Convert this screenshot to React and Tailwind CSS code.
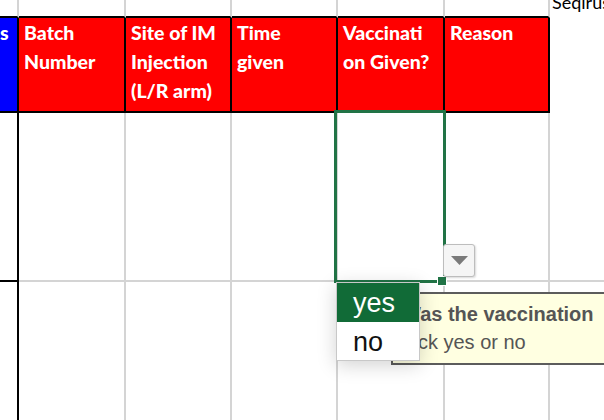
// Spreadsheet: vaccination log with data validation dropdown open
const cols = [19, 107, 106, 106, 107, 105, 54]

const headers = [
  ['s'],
  ['Batch', 'Number'],
  ['Site of IM', 'Injection', '(L/R arm)'],
  ['Time', 'given'],
  ['Vaccinati', 'on Given?'],
  ['Reason'],
]

const cal = { fontFamily: 'Lato, "Open Sans", sans-serif' }

function TopRow() {
  return (
    <div className="flex h-[18px]">
      {cols.map((w, i) => (
        <div
          key={i}
          style={{ width: w }}
          className={
            i < 6
              ? 'shrink-0 border-b-2 border-r-2 border-b-black border-r-[#d4d4d4]'
              : 'shrink-0 overflow-hidden pl-[2px]'
          }
        >
          {i === 6 && (
            <div className="-mt-[7px] text-[18px] leading-[18px] text-black whitespace-nowrap" style={cal}>
              Seqirus
            </div>
          )}
        </div>
      ))}
    </div>
  )
}

function HeaderRow() {
  return (
    <div className="flex h-[95px]">
      {cols.map((w, i) => {
        if (i === 6) return <div key={i} style={{ width: w }} className="shrink-0" />
        return (
          <div
            key={i}
            style={{ width: w, ...cal }}
            className={
              'shrink-0 overflow-hidden border-b-2 border-r-2 border-black text-[19.5px] font-black leading-[29px] text-white whitespace-nowrap ' +
              (i === 0 ? 'bg-[#0000ff] pl-0' : 'bg-[#ff0000] pl-[5px]')
            }
          >
            {headers[i].map((line) => (
              <div key={line}>{line}</div>
            ))}
          </div>
        )
      })}
    </div>
  )
}

function BodyRow({ height, last }) {
  return (
    <div className="flex" style={{ height }}>
      {cols.map((w, i) => {
        let cls = 'shrink-0 '
        if (i === 0) cls += 'border-r-2 border-black' + (last ? '' : ' border-b-2')
        else if (i < 6) cls += 'border-r-2 border-r-[#d4d4d4]' + (last ? '' : ' border-b-2 border-b-[#d4d4d4]')
        else cls += last ? '' : 'border-b-2 border-b-[#d4d4d4]'
        return <div key={i} style={{ width: w }} className={cls} />
      })}
    </div>
  )
}

export default function App() {
  return (
    <div className="relative h-[420px] w-[604px] overflow-hidden bg-white">
      <TopRow />
      <HeaderRow />
      <BodyRow height={169} />
      <BodyRow height={140} last />

      {/* selected cell */}
      <div className="absolute left-[334px] top-[110px] h-[173px] w-[112px] border-[3px] border-[#217346]" />
      <div className="absolute left-[437px] top-[276px] h-[10px] w-[10px] border border-white bg-[#217346]" />

      {/* dropdown arrow */}
      <div className="absolute left-[443px] top-[244px] flex h-[33px] w-[32px] items-center justify-center rounded-[3px] border border-[#bdbdbd] bg-[#f5f5f5] shadow-[1px_1px_2px_rgba(0,0,0,0.15)]">
        <svg width="17" height="9" viewBox="0 0 17 9">
          <polygon points="0,0 17,0 8.5,9" fill="#7a7a7a" />
        </svg>
      </div>

      {/* input message tooltip */}
      <div
        className="absolute left-[391px] top-[292px] h-[73px] w-[260px] border-2 border-[#5c5c5c] bg-[#ffffe1] pl-[9px] pt-[6px] text-[20px] leading-[28px] text-[#555555] whitespace-nowrap"
        style={{ fontFamily: '"Liberation Sans", Arial, sans-serif' }}
      >
        <div className="w-[196px] overflow-hidden font-bold">Was the vaccination given?</div>
        <div>Tick yes or no</div>
      </div>

      {/* validation list */}
      <div
        className="absolute left-[336px] top-[282px] w-[84px] border border-[#c8c8c8] bg-white shadow-[0_4px_18px_rgba(0,0,0,0.18)]"
        style={{ fontFamily: '"Liberation Sans", Arial, sans-serif' }}
      >
        <div className="h-[39px] bg-[#116b37] pl-[16px] text-[27px] leading-[41px] text-white">yes</div>
        <div className="h-[38px] pl-[16px] text-[27px] leading-[40px] text-[#111111]">no</div>
      </div>
    </div>
  )
}
